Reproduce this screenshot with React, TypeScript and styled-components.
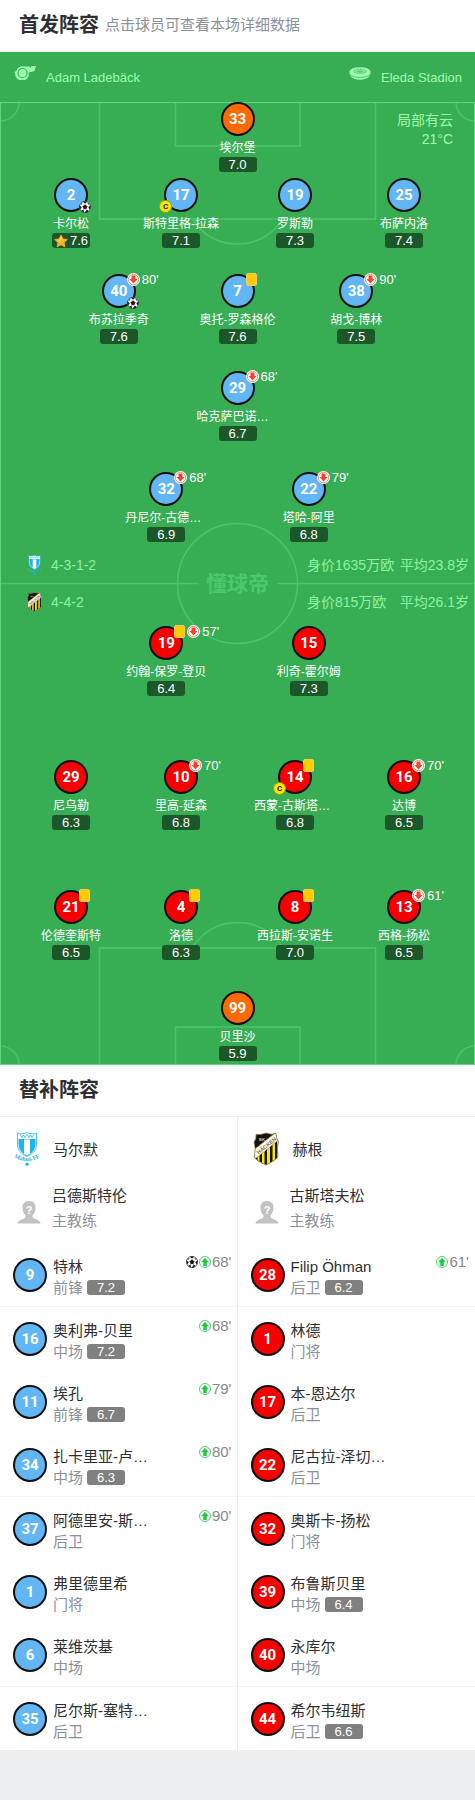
import React from "react";
import styled, { createGlobalStyle, css } from "styled-components";

const GlobalStyle = createGlobalStyle`
  * { box-sizing: border-box; }
  body {
    margin: 0;
    background: #edeef0;
    color: #2d2f33;
    font-family: "Liberation Sans", "Noto Sans CJK SC", sans-serif;
    font-size: 15px;
  }
  button {
    border: 0;
    padding: 0;
    background: none;
    color: inherit;
    font: inherit;
    cursor: pointer;
  }
  svg { flex: none; }
`;

type Tone = "home" | "away" | "keeper";

const tones: Record<Tone, string> = {
  home: "#61b6f3",
  away: "#f60000",
  keeper: "#ff6a00",
};

const Page = styled.main`
  width: 100%;
`;

const SectionHeader = styled.header`
  display: flex;
  align-items: center;
  gap: 6px;
  height: 52px;
  padding: 0 19px 2px;
  border-bottom: 1px solid #eeeff0;
  background: #fff;
`;

const SectionTitle = styled.h2`
  margin: 0;
  font-size: 20px;
  font-weight: 700;
  line-height: 28px;
`;

const SectionHint = styled.span`
  color: #8b9199;
  font-size: 15px;
  line-height: 22px;
`;

const MatchBar = styled.div`
  display: flex;
  justify-content: space-between;
  height: 50px;
  padding: 0 13px 0 14px;
  background: #38ae54;
  color: #9dfdaf;
  font-size: 13px;
`;

const MatchInfo = styled.div`
  display: flex;
  align-items: center;
  gap: 10px;

  svg {
    margin-bottom: 8px;
  }
`;

const Pitch = styled.section`
  position: relative;
  padding-bottom: 4px;
  background: #38ae54;
  color: #fff;
`;

const Markings = styled.svg`
  position: absolute;
  inset: 0;
  width: 100%;
  height: 100%;
`;

const Weather = styled.div`
  position: absolute;
  top: 9px;
  right: 22px;
  color: #9dfdaf;
  font-size: 14px;
  line-height: 19px;
  text-align: right;
`;

const lineLayouts: Record<number, { columns: string; padding: string }> = {
  1: { columns: "1fr", padding: "0" },
  2: { columns: "1fr 1fr", padding: "0 20%" },
  3: { columns: "1fr 1fr 1fr", padding: "0 12.5%" },
  4: { columns: "110fr 110fr 118fr 100fr", padding: "0 21px 0 16px" },
};

const Line = styled.div<{ $count: number; $space: number }>`
  position: relative;
  display: grid;
  grid-template-columns: ${(p) => lineLayouts[p.$count].columns};
  justify-items: center;
  margin-top: ${(p) => p.$space}px;
  padding: ${(p) => lineLayouts[p.$count].padding};
`;

const PlayerButton = styled.button`
  display: flex;
  flex-direction: column;
  align-items: center;
  white-space: nowrap;
`;

const Shirt = styled.span<{ $tone: Tone }>`
  position: relative;
  display: flex;
  flex: none;
  align-items: center;
  justify-content: center;
  width: 34px;
  height: 34px;
  border: 2px solid #111;
  border-radius: 50%;
  background: ${(p) => tones[p.$tone]};
  color: #fff;
  font-family: Roboto, sans-serif;
  font-size: 15px;
  font-weight: 700;
`;

const PlayerName = styled.span<{ $clipped: boolean }>`
  width: ${(p) => (p.$clipped ? "82px" : "auto")};
  margin-top: 3px;
  font-size: 12px;
  line-height: 18px;
  text-align: left;
`;

const Rating = styled.span<{ $muted?: boolean }>`
  display: flex;
  align-items: center;
  justify-content: center;
  gap: 2px;
  width: 38px;
  height: 15px;
  border-radius: 3px;
  background: ${(p) => (p.$muted ? "#808080" : "#1c572a")};
  color: #fff;
  font-size: 13px;
  line-height: 15px;
`;

const Events = styled.span`
  position: absolute;
  top: -3px;
  left: 23px;
  display: flex;
  align-items: center;
  gap: 2px;
  height: 13px;
  font-family: "Liberation Sans", sans-serif;
  font-size: 13px;
  font-weight: 400;
  white-space: nowrap;
`;

const YellowCard = styled.i`
  flex: none;
  width: 11px;
  height: 13px;
  border: 1px solid #f3c86a;
  border-radius: 2px;
  background: #ffcc00;
`;

const Corner = styled.span<{ $side: "left" | "right" }>`
  position: absolute;
  bottom: -3px;
  display: flex;
  ${(p) =>
    p.$side === "left"
      ? css`
          left: -7px;
        `
      : css`
          right: -5px;
        `}
`;

const CaptainMark = styled.span`
  width: 13px;
  height: 13px;
  border: 1px solid #a79a10;
  border-radius: 50%;
  background: #ffe500;
  color: #222;
  font-size: 8px;
  line-height: 11px;
  text-align: center;
`;

const Midfield = styled.div`
  position: relative;
  display: flex;
  flex-direction: column;
  gap: 11px;
  padding: 10px 6px 11px 26px;
  color: #8df3a2;
  font-size: 14px;
`;

const TeamLine = styled.div`
  display: flex;
  align-items: center;
  height: 26px;
  line-height: 26px;
`;

const Formation = styled.span`
  flex: 1;
  padding-left: 8px;
`;

const TeamFacts = styled.span`
  display: flex;
  justify-content: space-between;
  width: 162px;
  white-space: nowrap;
`;

const Watermark = styled.div`
  position: absolute;
  top: 50%;
  left: 50%;
  transform: translate(-50%, -50%);
  color: #4cc86a;
  font-size: 21px;
  font-weight: 700;
  line-height: 24px;
`;

const Bench = styled.section`
  display: grid;
  grid-template-columns: 1fr 1fr;
  background: #fff;
`;

const BenchColumn = styled.div`
  min-width: 0;
  & + & {
    box-shadow: -1px 0 #ebecee;
  }
`;

const BenchTeam = styled.div`
  display: flex;
  align-items: center;
  gap: 13px;
  height: 63px;
  padding: 0 14px;
`;

const Coach = styled.div`
  display: flex;
  align-items: flex-start;
  gap: 11px;
  height: 63px;
  padding: 3px 17px 0;

  svg {
    margin-top: 17px;
  }
`;

const CoachText = styled.div`
  display: flex;
  flex-direction: column;
  line-height: 25px;
`;

const BenchRow = styled.button<{ $ruled: boolean }>`
  display: flex;
  align-items: flex-start;
  gap: 6px;
  width: 100%;
  height: ${(p) => (p.$ruled ? 64 : 63)}px;
  padding: 13px 6px 0 13px;
  border-bottom: ${(p) => (p.$ruled ? "1px solid #f3f4f5" : "0")};
  text-align: left;

  ${Shirt} {
    margin-top: 2px;
  }
`;

const BenchText = styled.span`
  display: flex;
  flex: 1;
  flex-direction: column;
  line-height: 21px;
  white-space: nowrap;
`;

const Role = styled.span`
  display: flex;
  align-items: center;
  gap: 4px;
  color: #8b9199;
`;

const BenchEvents = styled.span`
  display: flex;
  align-items: center;
  gap: 1px;
  height: 11px;
  color: #86888c;
`;

const WhistleIcon = () => (
  <svg width="22" height="14" viewBox="0 0 22 14" aria-hidden="true">
    <path d="M10 0.5 H15 L16.5 1.8 L17.5 0 H22 L20.5 5 L14.5 6.5 A6.8 6.3 0 1 1 2.5 4.5 A7 7 0 0 1 10 .5Z" fill="#9dfdaf" />
    <path d="M0 6 L3 5 V9 Z" fill="#9dfdaf" />
    <circle cx="8.5" cy="7" r="4.5" fill="none" stroke="#38ae54" strokeWidth="1.2" />
  </svg>
);

const StadiumIcon = () => (
  <svg width="22" height="13" viewBox="0 0 22 13" aria-hidden="true">
    <path d="M0 5 C2 9 20 9 22 5 L20.5 9 C17 14 5 14 1.5 9Z" fill="#9dfdaf" />
    <ellipse cx="11" cy="4.8" rx="10.6" ry="4.6" fill="#9dfdaf" />
    <ellipse cx="11" cy="4.3" rx="6.4" ry="2.4" fill="#84e99a" stroke="#4fc06a" strokeWidth=".7" strokeDasharray="2 1" />
    <ellipse cx="11" cy="4.6" rx="3.2" ry="1.1" fill="#5acb74" />
    <path d="M1 7.5 C5 11.4 17 11.4 21 7.5" fill="none" stroke="#38ae54" strokeWidth=".7" />
  </svg>
);

const BallIcon = () => (
  <svg width="12" height="12" viewBox="0 0 24 24" aria-label="进球">
    <circle cx="12" cy="12" r="11.3" fill="#fff" stroke="#333" strokeWidth="1.3" />
    <path d="M12 7.2 L16.6 10.5 L14.8 15.8 H9.2 L7.4 10.5Z M7.6 1.6 Q12 -.4 16.4 1.6 L12 4.8Z M22.9 8 Q24 13 21.4 17.3 L18.9 12.4Z M1.1 8 Q0 13 2.6 17.3 L5.1 12.4Z M17.8 21.6 Q14 23.8 11.6 23.2 L14.6 18.6 L18.4 18.2Z M5.6 18.2 L9.4 18.6 L10 23 Q7.6 22.6 5 20.6Z M17 3 L21.4 6.8 L18 6.8Z M7 3 L2.6 6.8 L6 6.8Z" fill="#1b1b1b" />
    <path d="M12 4.8V7.2M16.6 10.5L18.9 12.4M7.4 10.5L5.1 12.4M14.8 15.8L14.8 18.6M9.2 15.8V18.6" stroke="#1b1b1b" strokeWidth="1" />
  </svg>
);

const SubOffIcon = () => (
  <svg width="13" height="13" viewBox="0 0 26 26" aria-label="换下">
    <circle cx="13" cy="13" r="13" fill="#fff" />
    <circle cx="13" cy="13" r="10.4" fill="none" stroke="#f8705c" strokeWidth="1.6" />
    <path d="M9 5 H17 V12 H21 L13 21 L5 12 H9Z" fill="#f8432c" />
  </svg>
);

const SubOnIcon = () => (
  <svg width="12" height="12" viewBox="0 0 24 24" aria-label="换上">
    <circle cx="12" cy="12" r="11" fill="#fff" stroke="#3fc85d" strokeWidth="1.8" />
    <path d="M8.5 20 H15.5 V12.5 H20 L12 4 L4 12.5 H8.5Z" fill="#1fc843" />
  </svg>
);

const StarIcon = () => (
  <svg width="14" height="14" viewBox="0 0 28 28" aria-label="本场最佳">
    <defs>
      <linearGradient id="star" x1="0" y1="0" x2="0" y2="1">
        <stop offset="0" stopColor="#ffe25a" />
        <stop offset="1" stopColor="#ff9d1c" />
      </linearGradient>
    </defs>
    <path d="M14 2 L17.8 10 L26.5 11 L20 17 L21.8 25.6 L14 21.4 L6.2 25.6 L8 17 L1.5 11 L10.2 10Z" fill="url(#star)" stroke="#f9a825" strokeWidth="2" strokeLinejoin="round" />
  </svg>
);

const MalmoCrest = ({ width, height }: { width: number; height: number }) => (
  <svg width={width} height={height} viewBox="0 0 26 34" aria-hidden="true">
    <path d="M3.5 1 L7 2 L13 .8 L19 2 L22.5 1 V12 C22.5 18 19 22 13 24.5 C7 22 3.5 18 3.5 12Z" fill="#fff" stroke="#35bdec" strokeWidth=".9" />
    <path d="M4.5 7 H21.5 V12 C21.5 17.5 18 21.5 13 24 C8 21.5 4.5 17.5 4.5 12Z" fill="#1fb4ea" />
    <path d="M10 7.5 H16 V21.5 L13 23.5 L10 21.5Z" fill="#fff" />
    <path d="M6 2.5 L8 5.5 L9.5 3 L11 5.5 L13 2.5 L15 5.5 L16.5 3 L18 5.5 L20 2.5" fill="none" stroke="#35bdec" strokeWidth=".9" />
    <path id="malmo-arc" d="M1 26 Q13 32 25 26" fill="none" />
    <text fill="#1fb4ea" fontSize="6" fontWeight="700" fontFamily="Liberation Serif, serif">
      <textPath href="#malmo-arc" startOffset="50%" textAnchor="middle">Malmö FF</textPath>
    </text>
    <circle cx="13" cy="32.2" r="1.6" fill="#1fb4ea" />
  </svg>
);

const shieldPath =
  "M4 2.5 Q9 3 14 1 Q19 3 24 1.5 Q24 6 26.5 9.5 Q24.5 15 26 24 Q25.5 27.5 14 33 Q3 28 2.5 25 Q4 16 2 10 Q4.5 7 4 2.5Z";

const HackenCrest = ({ width, height }: { width: number; height: number }) => (
  <svg width={width} height={height} viewBox="0 0 28 34" aria-hidden="true">
    <defs>
      <clipPath id="hacken-shield">
        <path d={shieldPath} />
      </clipPath>
    </defs>
    <g clipPath="url(#hacken-shield)">
      <rect width="28" height="34" fill="#17140f" />
      <path d="M10 14 H12.5 V34 H10Z M15 10 H18 V34 H15Z M20.5 8 H23 V34 H20.5Z M5.5 20 H7.5 V34 H5.5Z M25 6 H28 V34 H25Z" fill="#f8e70c" />
      <path d="M-1 20 L24.5 0 L29 6 L3 27Z" fill="#fffdf4" stroke="#a68b5a" strokeWidth=".7" />
      <text x="14.5" y="15.5" transform="rotate(-39 14.5 13.5)" textAnchor="middle" fontSize="5.5" fontWeight="700" fill="#85683f">HÄCKEN</text>
      <text x="10" y="8.5" textAnchor="middle" fontSize="4" fontWeight="700" fill="#cfc6b2">BK</text>
    </g>
    <path d={shieldPath} fill="none" stroke="#8d7a45" strokeWidth=".8" />
  </svg>
);

const CoachIcon = () => (
  <svg width="24" height="24" viewBox="0 0 24 24" aria-hidden="true">
    <path d="M12 1 C16.5 1 18.8 4 18.6 8 C18.4 11.5 17 13.5 15.5 15.5 V17 C16 19.5 23 19 23.5 23.5 H.5 C1 19 8 19.5 8.5 17 V15.5 C7 13.5 5.6 11.5 5.4 8 C5.2 4 7.5 1 12 1Z" fill="#c2c2c2" />
    <text x="12" y="13.5" textAnchor="middle" fontSize="11" fontWeight="700" fill="#fff">?</text>
  </svg>
);

const PitchMarkings = () => (
  <Markings viewBox="0 0 475 963" preserveAspectRatio="none" aria-hidden="true">
    <g fill="none" stroke="#4bc369" strokeWidth="1.5">
      <path d="M99.5 0 V117 H375.5 V0" />
      <path d="M175.5 0 V44 H300 V0" />
      <path d="M192 117 Q209 142 237.5 142 Q266 142 283 117" />
      <path d="M99.5 963 V846 H375.5 V963" />
      <path d="M175.5 963 V925 H300 V963" />
      <path d="M192 846 Q209 820.5 237.5 820.5 Q266 820.5 283 846" />
      <circle cx="237.5" cy="481.5" r="60" />
      <path d="M0 481.5 H198 M277 481.5 H475" />
      <path d="M19 0 A19 19 0 0 1 0 19 M456 0 A19 19 0 0 0 475 19 M19 963 A19 19 0 0 0 0 944 M456 963 A19 19 0 0 1 475 944" />
    </g>
    <rect x=".5" y=".5" width="474" height="962" fill="none" stroke="#5fd67c" />
  </Markings>
);

interface StarterData {
  no: number;
  name: string;
  rating: string;
  tone?: Tone;
  off?: string;
  card?: boolean;
  goal?: boolean;
  captain?: boolean;
  best?: boolean;
}

interface LineData {
  space: number;
  players: StarterData[];
}

const homeLines: LineData[] = [
  { space: 0, players: [{ no: 33, name: "埃尔堡", rating: "7.0", tone: "keeper" }] },
  {
    space: 6,
    players: [
      { no: 2, name: "卡尔松", rating: "7.6", goal: true, best: true },
      { no: 17, name: "斯特里格-拉森", rating: "7.1", captain: true },
      { no: 19, name: "罗斯勒", rating: "7.3" },
      { no: 25, name: "布萨内洛", rating: "7.4" },
    ],
  },
  {
    space: 26,
    players: [
      { no: 40, name: "布苏拉季奇", rating: "7.6", off: "80'", goal: true },
      { no: 7, name: "奥托-罗森格伦", rating: "7.6", card: true },
      { no: 38, name: "胡戈-博林", rating: "7.5", off: "90'" },
    ],
  },
  { space: 27, players: [{ no: 29, name: "哈克萨巴诺…", rating: "6.7", off: "68'" }] },
  {
    space: 31,
    players: [
      { no: 32, name: "丹尼尔-古德…", rating: "6.9", off: "68'" },
      { no: 22, name: "塔哈-阿里", rating: "6.8", off: "79'" },
    ],
  },
];

const awayLines: LineData[] = [
  {
    space: 0,
    players: [
      { no: 19, name: "约翰-保罗-登贝", rating: "6.4", card: true, off: "57'" },
      { no: 15, name: "利奇-霍尔姆", rating: "7.3" },
    ],
  },
  {
    space: 64,
    players: [
      { no: 29, name: "尼乌勒", rating: "6.3" },
      { no: 10, name: "里高-延森", rating: "6.8", off: "70'" },
      { no: 14, name: "西蒙-古斯塔…", rating: "6.8", card: true, captain: true },
      { no: 16, name: "达博", rating: "6.5", off: "70'" },
    ],
  },
  {
    space: 60,
    players: [
      { no: 21, name: "伦德奎斯特", rating: "6.5", card: true },
      { no: 4, name: "洛德", rating: "6.3", card: true },
      { no: 8, name: "西拉斯-安诺生", rating: "7.0", card: true },
      { no: 13, name: "西格-扬松", rating: "6.5", off: "61'" },
    ],
  },
  { space: 31, players: [{ no: 99, name: "贝里沙", rating: "5.9", tone: "keeper" }] },
];

interface BenchData {
  no: number;
  name: string;
  role: string;
  rating?: string;
  on?: string;
  goal?: boolean;
}

const homeBench: BenchData[] = [
  { no: 9, name: "特林", role: "前锋", rating: "7.2", on: "68'", goal: true },
  { no: 16, name: "奥利弗-贝里", role: "中场", rating: "7.2", on: "68'" },
  { no: 11, name: "埃孔", role: "前锋", rating: "6.7", on: "79'" },
  { no: 34, name: "扎卡里亚-卢…", role: "中场", rating: "6.3", on: "80'" },
  { no: 37, name: "阿德里安-斯…", role: "后卫", on: "90'" },
  { no: 1, name: "弗里德里希", role: "门将" },
  { no: 6, name: "莱维茨基", role: "中场" },
  { no: 35, name: "尼尔斯-塞特…", role: "后卫" },
];

const awayBench: BenchData[] = [
  { no: 28, name: "Filip Öhman", role: "后卫", rating: "6.2", on: "61'" },
  { no: 1, name: "林德", role: "门将" },
  { no: 17, name: "本-恩达尔", role: "后卫" },
  { no: 22, name: "尼古拉-泽切…", role: "后卫" },
  { no: 32, name: "奥斯卡-扬松", role: "门将" },
  { no: 39, name: "布鲁斯贝里", role: "中场", rating: "6.4" },
  { no: 40, name: "永库尔", role: "中场" },
  { no: 44, name: "希尔韦纽斯", role: "后卫", rating: "6.6" },
];

const Starter = ({ player, tone }: { player: StarterData; tone: Tone }) => (
  <PlayerButton type="button">
    <Shirt $tone={player.tone ?? tone}>
      {player.no}
      {(player.card || player.off) && (
        <Events>
          {player.card && <YellowCard />}
          {player.off && <SubOffIcon />}
          {player.off}
        </Events>
      )}
      {player.goal && (
        <Corner $side="right">
          <BallIcon />
        </Corner>
      )}
      {player.captain && (
        <Corner $side="left">
          <CaptainMark>C</CaptainMark>
        </Corner>
      )}
    </Shirt>
    <PlayerName $clipped={player.name.endsWith("…")}>{player.name}</PlayerName>
    <Rating>
      {player.best && <StarIcon />}
      {player.rating}
    </Rating>
  </PlayerButton>
);

const Lines = ({ lines, tone }: { lines: LineData[]; tone: Tone }) => (
  <>
    {lines.map((line, i) => (
      <Line key={i} $count={line.players.length} $space={line.space}>
        {line.players.map((player) => (
          <Starter key={player.no} player={player} tone={tone} />
        ))}
      </Line>
    ))}
  </>
);

interface BenchListProps {
  crest: React.ReactNode;
  team: string;
  coach: string;
  tone: Tone;
  players: BenchData[];
}

const BenchList = ({ crest, team, coach, tone, players }: BenchListProps) => (
  <BenchColumn>
    <BenchTeam>
      {crest}
      {team}
    </BenchTeam>
    <Coach>
      <CoachIcon />
      <CoachText>
        {coach}
        <Role>主教练</Role>
      </CoachText>
    </Coach>
    {players.map((player, i) => (
      <BenchRow key={player.no} type="button" $ruled={i % 3 === 0}>
        <Shirt $tone={tone}>{player.no}</Shirt>
        <BenchText>
          {player.name}
          <Role>
            {player.role}
            {player.rating && <Rating $muted>{player.rating}</Rating>}
          </Role>
        </BenchText>
        {player.on && (
          <BenchEvents>
            {player.goal && <BallIcon />}
            <SubOnIcon />
            {player.on}
          </BenchEvents>
        )}
      </BenchRow>
    ))}
  </BenchColumn>
);

export default function App() {
  return (
    <Page>
      <GlobalStyle />
      <SectionHeader>
        <SectionTitle>首发阵容</SectionTitle>
        <SectionHint>点击球员可查看本场详细数据</SectionHint>
      </SectionHeader>
      <MatchBar>
        <MatchInfo>
          <WhistleIcon />
          Adam Ladebäck
        </MatchInfo>
        <MatchInfo>
          <StadiumIcon />
          Eleda Stadion
        </MatchInfo>
      </MatchBar>
      <Pitch>
        <PitchMarkings />
        <Weather>
          <div>局部有云</div>
          <div>21°C</div>
        </Weather>
        <Watermark>懂球帝</Watermark>
        <Lines lines={homeLines} tone="home" />
        <Midfield>
          <TeamLine>
            <MalmoCrest width={17} height={20} />
            <Formation>4-3-1-2</Formation>
            <TeamFacts>
              <span>身价1635万欧</span>
              <span>平均23.8岁</span>
            </TeamFacts>
          </TeamLine>
          <TeamLine>
            <HackenCrest width={17} height={20} />
            <Formation>4-4-2</Formation>
            <TeamFacts>
              <span>身价815万欧</span>
              <span>平均26.1岁</span>
            </TeamFacts>
          </TeamLine>
        </Midfield>
        <Lines lines={awayLines} tone="away" />
      </Pitch>
      <SectionHeader>
        <SectionTitle>替补阵容</SectionTitle>
      </SectionHeader>
      <Bench>
        <BenchList
          crest={<MalmoCrest width={26} height={34} />}
          team="马尔默"
          coach="吕德斯特伦"
          tone="home"
          players={homeBench}
        />
        <BenchList
          crest={<HackenCrest width={28} height={34} />}
          team="赫根"
          coach="古斯塔夫松"
          tone="away"
          players={awayBench}
        />
      </Bench>
    </Page>
  );
}
